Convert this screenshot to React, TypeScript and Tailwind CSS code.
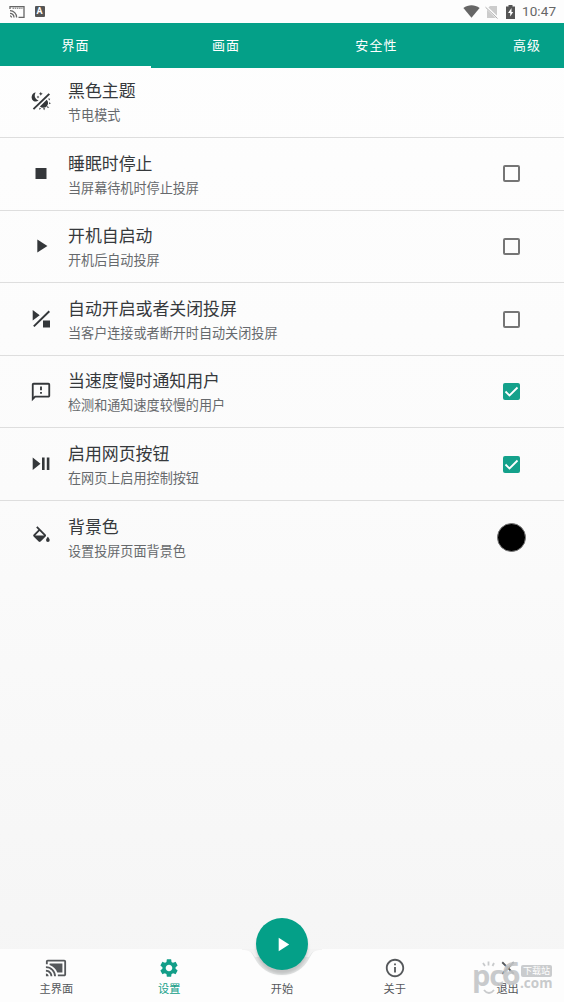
import type { ReactNode } from "react";
import {
    MdCastConnected,
    MdClose,
    MdInfoOutline,
    MdOutlineFeedback,
    MdPlayArrow,
    MdSettings,
    MdStop,
} from "react-icons/md";

type Control = "none" | "off" | "on" | "color";

function ThemeIcon() {
    return (
        <svg viewBox="0 0 20 20" className="size-5" fill="currentColor">
            <path d="M4.8 1.6A4.7 4.7 0 0 0 2.5 10 4.7 4.7 0 0 0 7.600 9.300 4.800 4.800 0 0 1 4.800 1.600z" />
            <path d="M17.6 2.2 19 3.5 3.1 18.8 1.8 17.4z" />
            <path d="M9.8.8l.6 1.4 1.4.6-1.4.6-.6 1.4-.6-1.4-1.4-.6 1.4-.6zM7 4.6l.4 1 1 .4-1 .4L7 7.4l-.4-1-1-.4 1-.4z" />
            <path d="M15.7 8.7 8.9 15.4a4.4 4.4 0 0 0 6.8-6.7z" />
            <path d="M17.2 7.6l2 .1-1 1.8zM18.1 11.2l1.8 1-1.8 1zM16.5 15l1.8 1.8-2.4-.3zM12 17.3h2.2l-1.1 1.9zM8.3 16.8l1.7.5-1.5 1.7z" />
        </svg>
    );
}

function PlayStopIcon() {
    return (
        <svg viewBox="0 0 20 20" className="size-5" fill="currentColor">
            <path d="M1.7 1v10.5l7-5.25zM17.6 1.5 19 2.9 3.5 18.1 2.1 16.7zM12 11.5h7v7h-7z" />
        </svg>
    );
}

function PlayPauseIcon() {
    return (
        <svg viewBox="0 0 20 20" className="size-5" fill="currentColor">
            <path d="M1.7 3.5v12.5l7.8-6.25zM11 3.5h2.6v12.5H11zM15.8 3.5h2.6v12.5h-2.6z" />
        </svg>
    );
}

function FillIcon() {
    return (
        <svg viewBox="0 0 24 24" className="mb-[5px] size-[22px]" fill="currentColor">
            <path
                d="M16.56 8.94 7.62 0 6.21 1.41l2.38 2.38-5.15 5.15a1.49 1.49 0 0 0 0 2.12l5.5 5.5a1.5 1.5 0 0 0 2.12 0l5.5-5.5c.59-.58.59-1.53 0-2.12zM5.21 10 10 5.21 14.79 10zM19 11.5s-2 2.17-2 3.5a2 2 0 0 0 4 0c0-1.33-2-3.5-2-3.5z"
                transform="translate(.5 2.5)"
            />
        </svg>
    );
}

const settings: { title: string; note: string; icon: ReactNode; control: Control }[] = [
    { title: "黑色主题", note: "节电模式", icon: <ThemeIcon />, control: "none" },
    { title: "睡眠时停止", note: "当屏幕待机时停止投屏", icon: <MdStop size={23} />, control: "off" },
    { title: "开机自启动", note: "开机后自动投屏", icon: <MdPlayArrow size={22} />, control: "off" },
    { title: "自动开启或者关闭投屏", note: "当客户连接或者断开时自动关闭投屏", icon: <PlayStopIcon />, control: "off" },
    { title: "当速度慢时通知用户", note: "检测和通知速度较慢的用户", icon: <MdOutlineFeedback size={22} />, control: "on" },
    { title: "启用网页按钮", note: "在网页上启用控制按钮", icon: <PlayPauseIcon />, control: "on" },
    { title: "背景色", note: "设置投屏页面背景色", icon: <FillIcon />, control: "color" },
];

function StatusBar() {
    return (
        <div className="flex h-[23px] shrink-0 items-center bg-[#fdfdfd] pl-[9px] pr-[7px] text-[#666]">
            <svg viewBox="0 0 16 14" className="h-[14px] w-4" fill="none" stroke="currentColor" strokeWidth="1.3">
                <path d="M1 4V1.6h14v10.8H9.5" />
                <path d="M3.5 3.2h10" strokeDasharray="1.5 .7" strokeWidth="1" />
                <path d="M1 5.7a6.6 6.6 0 0 1 6.6 6.7M1 8.3a4 4 0 0 1 4 4.1M1 10.9a1.5 1.5 0 0 1 1.5 1.5" />
            </svg>
            <span className="ml-[9.5px] flex h-[11px] w-[10px] items-center justify-center rounded-[1px] bg-[#555] text-[9px] font-bold leading-none text-white">A</span>
            <div className="ml-auto flex items-center">
                <svg viewBox="0 0 17 13" className="h-[13px] w-[17px]" fill="currentColor">
                    <path d="M8.5 12.8.4 3C5.2-.6 11.8-.6 16.6 3z" />
                </svg>
                <svg viewBox="0 0 14 14" className="ml-[5px] size-[14px]">
                    <path d="M5 1h7v12H2V4z" fill="#ccc" />
                    <path d="M.5 1.5 13 13.5" stroke="#fdfdfd" strokeWidth="2.5" />
                    <path d="M.5 2.2 12.5 13.5" stroke="#aaa" strokeWidth="1" />
                </svg>
                <svg viewBox="0 0 9 14" className="ml-[7px] h-[14px] w-[9px]">
                    <path d="M0 1.5h2.5V0h4v1.5H9V14H0z" fill="#555" />
                    <path d="M5.5 3 2 8h2.2v3.5L7.2 7H5.5z" fill="#fff" />
                </svg>
                <span className="ml-[7px] w-[35px] font-[Roboto,sans-serif] text-[13.5px] leading-none tracking-[0.1px]">10:47</span>
            </div>
        </div>
    );
}

function Tabs() {
    return (
        <div className="flex h-[45px] shrink-0 overflow-hidden bg-[#04a088] text-[13px] tracking-[1.1px] text-white">
            <div className="flex w-[151px] shrink-0 items-center justify-center border-b-2 border-white pt-[2px]">界面</div>
            <div className="flex w-[150px] shrink-0 items-center justify-center">画面</div>
            <div className="flex w-[151px] shrink-0 items-center justify-center">安全性</div>
            <div className="flex w-[150px] shrink-0 items-center justify-center">高级</div>
        </div>
    );
}

function Toggle({ control }: { control: Control }) {
    if (control === "none") return null;
    if (control === "color") return <span className="size-[29px] rounded-full border border-[#777] bg-black" />;
    if (control === "off") return <span className="size-[17px] rounded-[2px] border-2 border-[#757575]" />;
    return (
        <span className="flex size-[17px] items-center justify-center rounded-[2px] bg-[#14a18b]">
            <svg viewBox="0 0 17 17" className="size-[17px]" fill="none" stroke="#fff" strokeWidth="1.8">
                <path d="m2.5 8.5 4 4 8-8" />
            </svg>
        </span>
    );
}

function NavItem({ label, icon, active }: { label: string; icon?: ReactNode; active?: boolean }) {
    return (
        <div className={`flex flex-1 flex-col items-center pt-[7px] ${active ? "text-[#129e88]" : "text-[#55585b]"}`}>
            <div className="flex h-[24px] items-center">{icon}</div>
            <span className="mt-px text-[11.2px] leading-[17px]">{label}</span>
        </div>
    );
}

function Watermark() {
    return (
        <div className="absolute left-[472px] top-[958px] flex h-[38px] w-[86px] font-['Open_Sans',sans-serif] font-bold text-[#c3c5c7] opacity-90">
            <svg viewBox="0 0 86 38" className="absolute inset-0" fill="none" stroke="currentColor" strokeWidth="1.8">
                <path d="M12 32c3 4 7 4 10 0M11 5l2 3M16.5 3.5v4M22 5l-1.5 3" />
            </svg>
            <span className="mt-[2px] text-[29px] leading-[30px] tracking-[-1.2px]">pc</span>
            <span className="-ml-px text-[32px] leading-[30px] tracking-[-1px]">6</span>
            <div className="absolute left-[49px] top-[7px] flex flex-col">
                <span className="flex h-[12px] w-[31px] items-center justify-center rounded-[2px] bg-[#c5c7c9] font-['Noto_Sans_CJK_SC',sans-serif] text-[9px] font-normal leading-[12px] text-white">下载站</span>
                <span className="-ml-px text-[13.5px] leading-[12px]">.com</span>
            </div>
        </div>
    );
}

export default function App() {
    return (
        <div className="relative flex h-[1002px] w-[564px] flex-col overflow-hidden bg-linear-to-b from-[#fefefe] via-[#fbfbfb] to-[#f5f5f5] font-[Roboto,'Noto_Sans_CJK_SC',sans-serif]">
            <StatusBar />
            <Tabs />
            <main className="-mt-[2.5px] flex-1">
                {settings.map((item, i) => (
                    <div
                        key={item.title}
                        className={`flex h-[72.6px] items-center ${i < settings.length - 1 ? "border-b border-[#dedede]" : ""}`}
                    >
                        <div className="ml-[30px] flex w-[22px] shrink-0 justify-center text-[#34373a]">{item.icon}</div>
                        <div className="ml-4 flex-1 pt-[3.5px]">
                            <div className="text-[16.9px] leading-[26px] text-[#36393c]">{item.title}</div>
                            <div className="text-[13.1px] leading-[24px] text-[#66696c]">{item.note}</div>
                        </div>
                        <div className="mr-[38px] flex w-[30px] justify-center">
                            <Toggle control={item.control} />
                        </div>
                    </div>
                ))}
            </main>

            <nav className="relative flex h-[53px] shrink-0 bg-[#fdfdfd]">
                {/* notch the floating button sits in */}
                <svg viewBox="0 0 80 28" className="absolute left-[242px] top-0 h-7 w-20">
                    <path d="M0 0c6 0 9 2 12 8 6 12 16 18 28 18s22-6 28-18c3-6 6-8 12-8z" fill="#e3e5e5" />
                    <path d="M0 0h80v1c-8 0-10 2-13 7H13C10 3 8 1 0 1z" fill="#f3f3f3" />
                </svg>
                <NavItem label="主界面" icon={<MdCastConnected size={22} />} />
                <NavItem label="设置" icon={<MdSettings size={22} />} active />
                <NavItem label="开始" />
                <NavItem label="关于" icon={<MdInfoOutline size={22} />} />
                <NavItem label="退出" icon={<MdClose size={22} />} />
                <button className="absolute -top-[31px] left-[256px] flex size-[52px] items-center justify-center rounded-full bg-[#04a088] text-white shadow-[0_4px_3px_rgba(0,0,0,0.15)]">
                    <MdPlayArrow size={23} />
                </button>
            </nav>
            <Watermark />
        </div>
    );
}
